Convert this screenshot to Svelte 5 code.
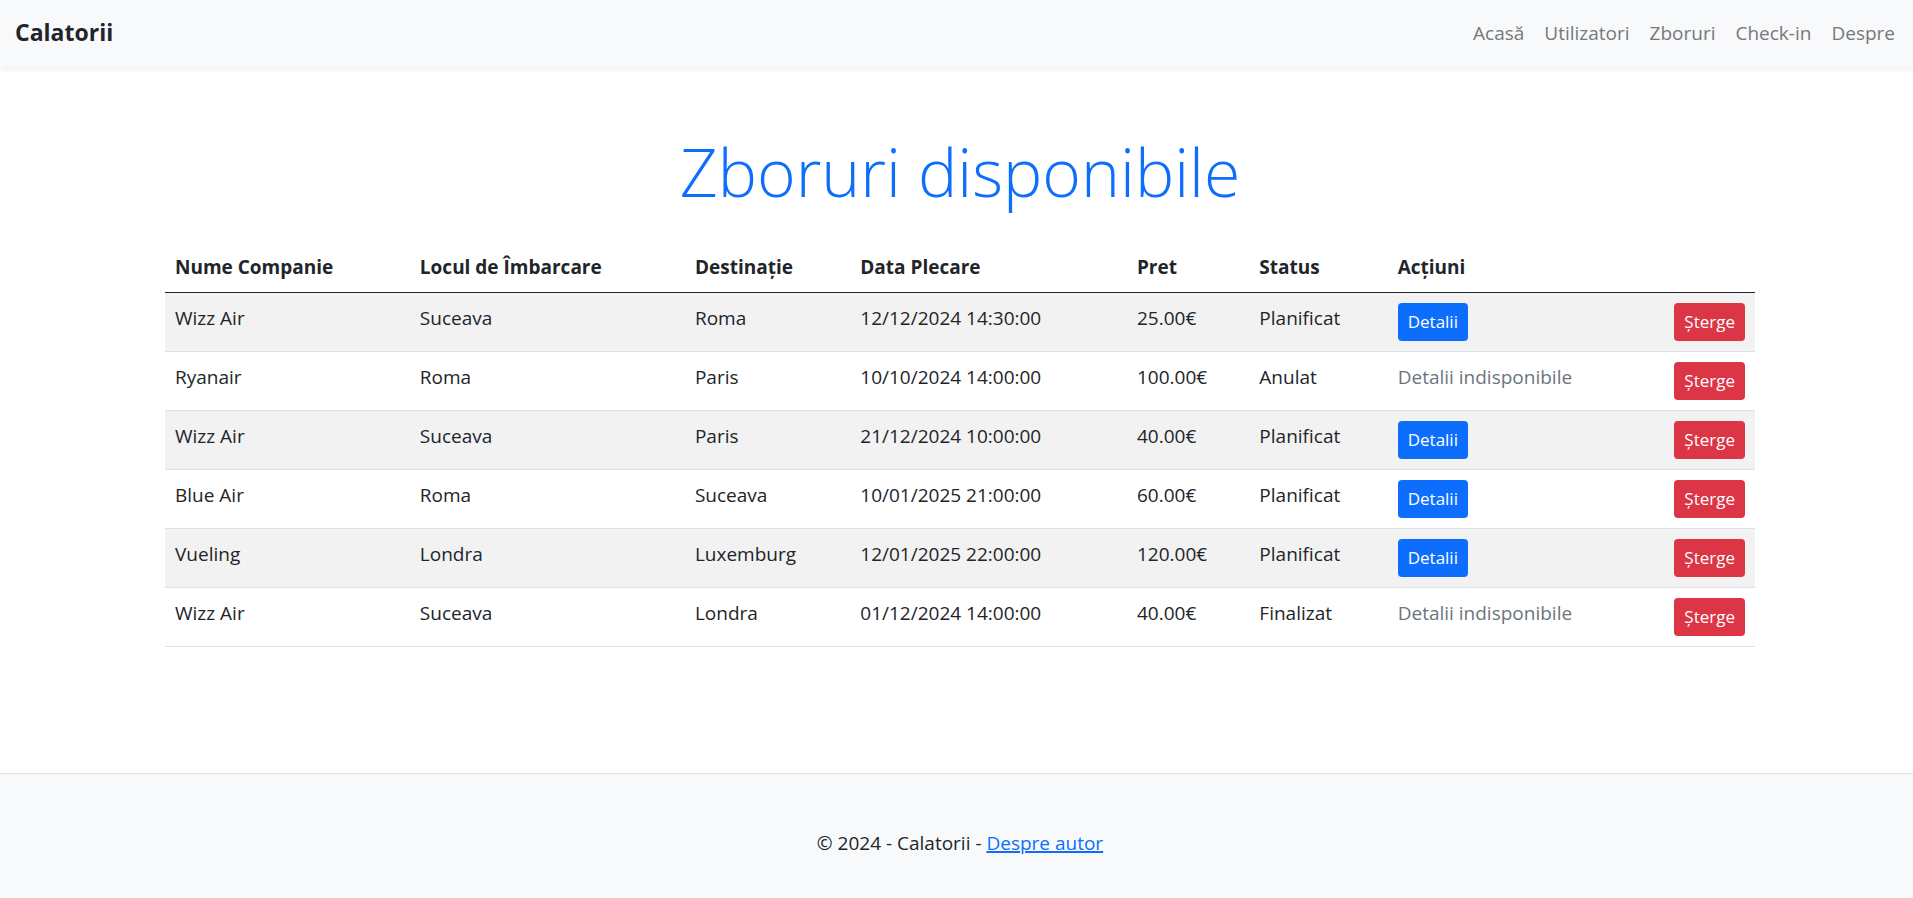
<script>
  const links = ['Acasă', 'Utilizatori', 'Zboruri', 'Check-in', 'Despre'];

  const columns = [
    { key: 'company', label: 'Nume Companie' },
    { key: 'from', label: 'Locul de Îmbarcare' },
    { key: 'to', label: 'Destinație' },
    { key: 'date', label: 'Data Plecare' },
    { key: 'price', label: 'Pret' },
    { key: 'status', label: 'Status' },
    { key: 'actions', label: 'Acțiuni' }
  ];

  let flights = $state([
    { company: 'Wizz Air', from: 'Suceava', to: 'Roma', date: '12/12/2024 14:30:00', price: '25.00€', status: 'Planificat' },
    { company: 'Ryanair', from: 'Roma', to: 'Paris', date: '10/10/2024 14:00:00', price: '100.00€', status: 'Anulat' },
    { company: 'Wizz Air', from: 'Suceava', to: 'Paris', date: '21/12/2024 10:00:00', price: '40.00€', status: 'Planificat' },
    { company: 'Blue Air', from: 'Roma', to: 'Suceava', date: '10/01/2025 21:00:00', price: '60.00€', status: 'Planificat' },
    { company: 'Vueling', from: 'Londra', to: 'Luxemburg', date: '12/01/2025 22:00:00', price: '120.00€', status: 'Planificat' },
    { company: 'Wizz Air', from: 'Suceava', to: 'Londra', date: '01/12/2024 14:00:00', price: '40.00€', status: 'Finalizat' }
  ]);

  function remove(flight) {
    flights = flights.filter((f) => f !== flight);
  }
</script>

<div class="page">
  <header>
    <a class="brand" href="#acasa">Calatorii</a>
    <nav>
      {#each links as link}
        <a href="#{link}">{link}</a>
      {/each}
    </nav>
  </header>

  <main>
    <h1>Zboruri disponibile</h1>
    <table>
      <colgroup>
        {#each columns as column}
          <col class={column.key} />
        {/each}
      </colgroup>
      <thead>
        <tr>
          {#each columns as column}
            <th scope="col">{column.label}</th>
          {/each}
        </tr>
      </thead>
      <tbody>
        {#each flights as flight}
          <tr>
            <td>{flight.company}</td>
            <td>{flight.from}</td>
            <td>{flight.to}</td>
            <td>{flight.date}</td>
            <td>{flight.price}</td>
            <td>{flight.status}</td>
            <td>
              <div class="buttons">
                {#if flight.status === 'Planificat'}
                  <a class="btn primary" href="#detalii">Detalii</a>
                {:else}
                  <span class="muted">Detalii indisponibile</span>
                {/if}
                <button class="btn danger" type="button" onclick={() => remove(flight)}>Șterge</button>
              </div>
            </td>
          </tr>
        {/each}
      </tbody>
    </table>
  </main>

  <footer>
    <p>© 2024 - Calatorii - <a href="#autor">Despre autor</a></p>
  </footer>
</div>

<style>
  :global(body) {
    margin: 0;
    background: #fff;
  }

  .page {
    display: flex;
    flex-direction: column;
    min-height: 100vh;
    color: #212529;
    font-family: 'Open Sans', 'Noto Sans', sans-serif;
    font-size: 19px;
    line-height: 30px;
  }

  header {
    display: flex;
    justify-content: space-between;
    align-items: center;
    padding: 9px 8px 11px 15px;
    background: #f8f9fb;
    box-shadow: 0 2px 6px rgba(0, 0, 0, 0.08);
  }

  .brand {
    color: #212529;
    font-size: 23px;
    font-weight: 700;
    line-height: 47px;
    text-decoration: none;
  }

  nav {
    display: flex;
  }

  nav a {
    padding: 0 10px;
    color: #777879;
    text-decoration: none;
  }

  main {
    flex: 1;
    box-sizing: border-box;
    width: 100%;
    max-width: 1597px;
    margin: 0 auto;
    padding: 56px 0 0 7px;
  }

  h1 {
    margin: 0 0 25px;
    color: #0d6efd;
    font-size: 66px;
    font-weight: 300;
    line-height: 96px;
    text-align: center;
  }

  table {
    width: 100%;
    border-collapse: separate;
    border-spacing: 0;
    table-layout: fixed;
    text-align: left;
  }

  .company { width: 15.4%; }
  .from { width: 17.3%; }
  .to { width: 10.4%; }
  .date { width: 17.4%; }
  .price { width: 7.7%; }
  .status { width: 8.7%; }
  .actions { width: 23.1%; }

  th,
  td {
    padding: 10px;
    border-bottom: 1px solid #dee2e6;
    vertical-align: top;
  }

  th {
    padding-top: 8px;
    border-bottom-color: #212529;
    font-weight: 700;
  }

  tbody tr:nth-child(odd) {
    background: #f2f2f2;
  }

  .buttons {
    display: flex;
    justify-content: space-between;
    align-items: flex-start;
  }

  .btn {
    padding: 5px 10px;
    border: 0;
    border-radius: 4px;
    color: #fff;
    font-family: inherit;
    font-size: 17px;
    line-height: 28px;
    text-decoration: none;
    cursor: pointer;
  }

  .primary { background: #0d6efd; }
  .danger { background: #dc3545; }
  .muted { color: #6c757d; }

  footer {
    padding: 54px 0 40px 7px;
    border-top: 1px solid #dee2e6;
    background: #f8f9fb;
    text-align: center;
  }

  footer p {
    margin: 0;
  }

  footer a {
    color: #0d6efd;
    text-decoration-thickness: 2px;
  }
</style>
